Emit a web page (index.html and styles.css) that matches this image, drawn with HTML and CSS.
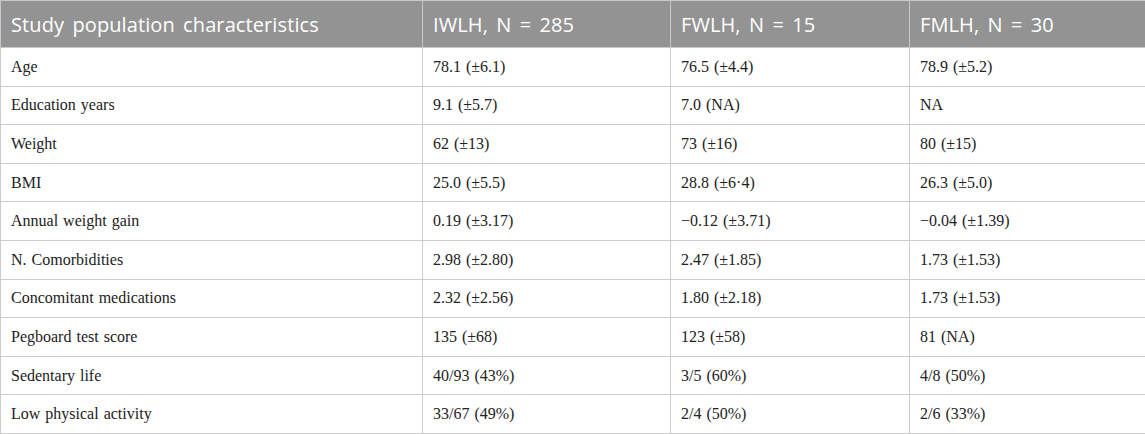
FILE: index.html
```html
<!DOCTYPE html>
<html>
<head>
<meta charset="utf-8">
<link rel="stylesheet" href="styles.css">
</head>
<body>
<table class="data">
  <colgroup>
    <col class="c1"><col class="c2"><col class="c3"><col class="c4">
  </colgroup>
  <thead>
    <tr class="head"><th>Study population characteristics</th><th>IWLH, N = 285</th><th>FWLH, N = 15</th><th>FMLH, N = 30</th></tr>
  </thead>
  <tbody>
    <tr><td>Age</td><td>78.1 (±6.1)</td><td>76.5 (±4.4)</td><td>78.9 (±5.2)</td></tr>
    <tr><td>Education years</td><td>9.1 (±5.7)</td><td>7.0 (NA)</td><td>NA</td></tr>
    <tr><td>Weight</td><td>62 (±13)</td><td>73 (±16)</td><td>80 (±15)</td></tr>
    <tr><td>BMI</td><td>25.0 (±5.5)</td><td>28.8 (±6·4)</td><td>26.3 (±5.0)</td></tr>
    <tr><td>Annual weight gain</td><td>0.19 (±3.17)</td><td>−0.12 (±3.71)</td><td>−0.04 (±1.39)</td></tr>
    <tr><td>N. Comorbidities</td><td>2.98 (±2.80)</td><td>2.47 (±1.85)</td><td>1.73 (±1.53)</td></tr>
    <tr><td>Concomitant medications</td><td>2.32 (±2.56)</td><td>1.80 (±2.18)</td><td>1.73 (±1.53)</td></tr>
    <tr><td>Pegboard test score</td><td>135 (±68)</td><td>123 (±58)</td><td>81 (NA)</td></tr>
    <tr><td>Sedentary life</td><td>40/93 (43%)</td><td>3/5 (60%)</td><td>4/8 (50%)</td></tr>
    <tr><td>Low physical activity</td><td>33/67 (49%)</td><td>2/4 (50%)</td><td>2/6 (33%)</td></tr>
  </tbody>
</table>
</body>
</html>
```

FILE: styles.css
```css
html, body {
  margin: 0;
  padding: 0;
  background: #ffffff;
}
.data {
  width: 1145px;
  border-collapse: collapse;
  table-layout: fixed;
}
.c1 { width: 422px; }
.c2 { width: 248px; }
.c3 { width: 239px; }
.c4 { width: 236px; }
.data tr { height: 38.6px; }
.data tr.head { height: 47px; }
.data th {
  background: #939393;
  color: #ffffff;
  font-family: "Open Sans", "Noto Sans", sans-serif;
  font-weight: 400;
  font-size: 20px;
  text-align: left;
  padding: 0 10px;
  border: 1px solid #c8c8c8;
  letter-spacing: 0.1px;
  word-spacing: 3px;
}
.data td {
  font-family: "Liberation Serif", serif;
  font-size: 16px;
  color: #222222;
  padding: 0 10px;
  border: 1px solid #cccccc;
  word-spacing: 1px;
}
```
